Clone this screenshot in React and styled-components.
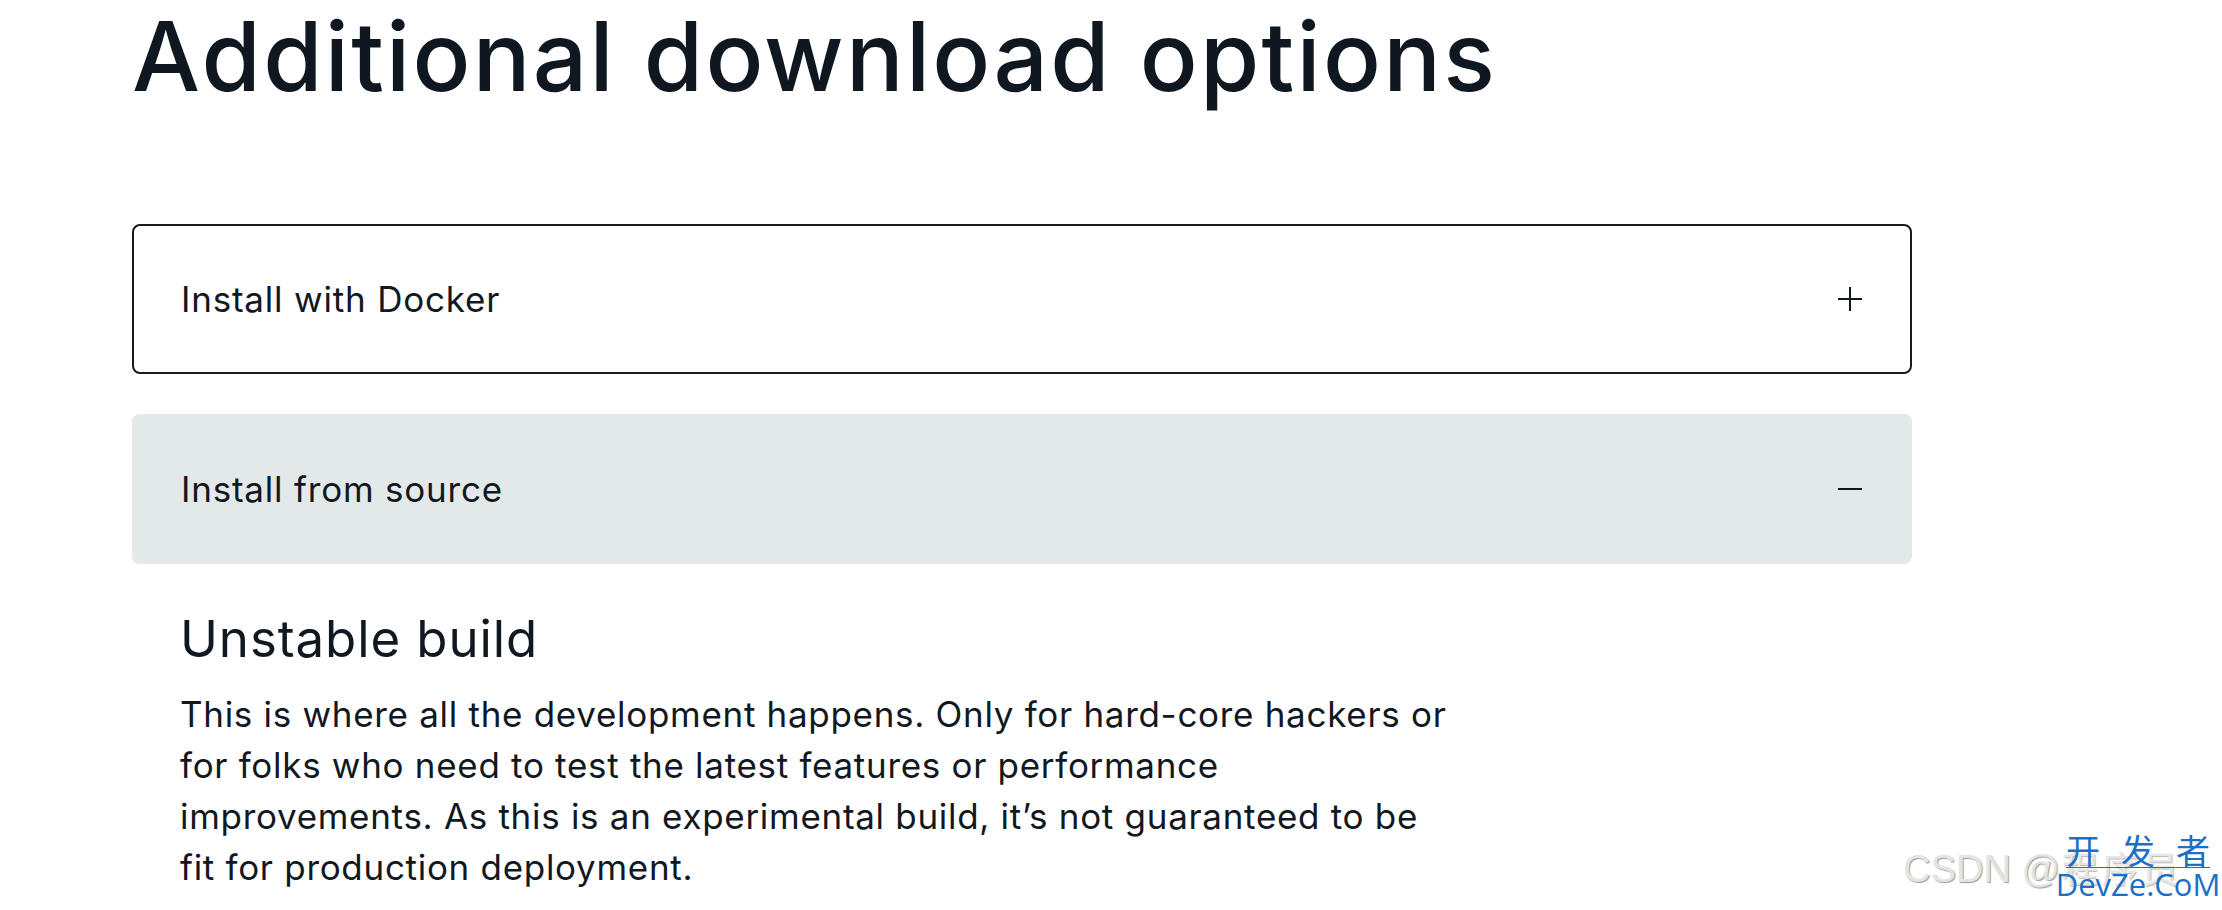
import React, { useState } from "react";
import styled, { createGlobalStyle } from "styled-components";

const GlobalStyle = createGlobalStyle`
  html, body {
    margin: 0;
    padding: 0;
    background: #fff;
  }
  body {
    font-family: "Inter", "Liberation Sans", sans-serif;
    color: #11181f;
  }
`;

const Page = styled.div`
  position: relative;
  height: 910px;
  overflow: hidden;
  box-sizing: border-box;
  padding: 8px 0 0 132px;
`;

const Title = styled.h1`
  margin: 0 0 120px;
  font-size: 96px;
  font-weight: 500;
  line-height: 1;
  letter-spacing: 2.25px;
  color: #0f1820;
`;

const Accordion = styled.div`
  width: 1780px;
  display: flex;
  flex-direction: column;
  gap: 40px;
`;

const Item = styled.div`
  display: flex;
  flex-direction: column;
`;

const Header = styled.button`
  display: flex;
  align-items: center;
  justify-content: space-between;
  box-sizing: border-box;
  width: 100%;
  height: 150px;
  padding: 0 47px 0 47px;
  border: 2px solid ${(p) => (p.$open ? "#e3e8e8" : "#141b22")};
  border-radius: 8px;
  background: ${(p) => (p.$open ? "#e3e8e8" : "#fff")};
  font-family: inherit;
  font-size: 35px;
  font-weight: 400;
  letter-spacing: 0.8px;
  color: #11181f;
  cursor: pointer;
  text-align: left;
`;

const Icon = styled.svg`
  width: 26px;
  height: 26px;
  flex: none;
`;

const Panel = styled.div`
  padding: 0 48px;
`;

const PanelTitle = styled.h3`
  margin: 44px 0 20px;
  font-size: 51px;
  font-weight: 400;
  line-height: 1.2;
  letter-spacing: 0.9px;
`;

const PanelText = styled.p`
  margin: 0;
  max-width: 1278px;
  font-size: 35px;
  line-height: 51px;
  letter-spacing: 0.7px;
`;

const Watermark = styled.div`
  position: absolute;
  right: 12px;
  bottom: 10px;
  display: flex;
  align-items: flex-end;
  gap: 6px;
`;

const Csdn = styled.span`
  font-family: "Liberation Sans", sans-serif;
  font-size: 38px;
  line-height: 1;
  color: #e4e4e4;
  text-shadow: 1px 1px 1px #9a9a9a;
  margin-bottom: 12px;
`;

const Brand = styled.div`
  position: relative;
  width: 144px;
  display: flex;
  flex-direction: column;
  align-items: center;
  color: #1b6fc6;
  font-family: "Noto Sans CJK SC", "Liberation Sans", sans-serif;
`;

const BrandBehind = styled.span`
  position: absolute;
  left: -4px;
  top: 8px;
  font-size: 36px;
  letter-spacing: 4px;
  color: #e6e6e6;
  text-shadow: 1px 1px 1px #b8b8b8;
`;

const BrandCn = styled.span`
  position: relative;
  align-self: stretch;
  display: flex;
  justify-content: space-between;
  font-size: 34px;
  line-height: 34px;
  border-bottom: 1px solid #1b6fc6;
`;

const BrandEn = styled.span`
  position: relative;
  font-family: "Open Sans", "Liberation Sans", sans-serif;
  font-size: 31px;
  line-height: 32px;
`;

const PlusIcon = ({ open }) => (
  <Icon viewBox="0 0 26 26" fill="none" stroke="#11181f" strokeWidth="2">
    <path d="M1 13h24" />
    {!open && <path d="M13 1v24" />}
  </Icon>
);

const options = [
  { id: "docker", title: "Install with Docker" },
  {
    id: "source",
    title: "Install from source",
    heading: "Unstable build",
    text: "This is where all the development happens. Only for hard-core hackers or for folks who need to test the latest features or performance improvements. As this is an experimental build, it\u2019s not guaranteed to be fit for production deployment.",
  },
];

export default function App() {
  const [openId, setOpenId] = useState("source");

  return (
    <Page>
      <GlobalStyle />
      <Title>Additional download options</Title>
      <Accordion>
        {options.map((opt) => {
          const open = openId === opt.id;
          return (
            <Item key={opt.id}>
              <Header $open={open} onClick={() => setOpenId(open ? null : opt.id)}>
                <span>{opt.title}</span>
                <PlusIcon open={open} />
              </Header>
              {open && opt.heading && (
                <Panel>
                  <PanelTitle>{opt.heading}</PanelTitle>
                  <PanelText>{opt.text}</PanelText>
                </Panel>
              )}
            </Item>
          );
        })}
      </Accordion>
      <Watermark>
        <Csdn>CSDN @</Csdn>
        <Brand>
          <BrandBehind>程序员</BrandBehind>
          <BrandCn>
            <span>开</span>
            <span>发</span>
            <span>者</span>
          </BrandCn>
          <BrandEn>DevZe.CoM</BrandEn>
        </Brand>
      </Watermark>
    </Page>
  );
}
